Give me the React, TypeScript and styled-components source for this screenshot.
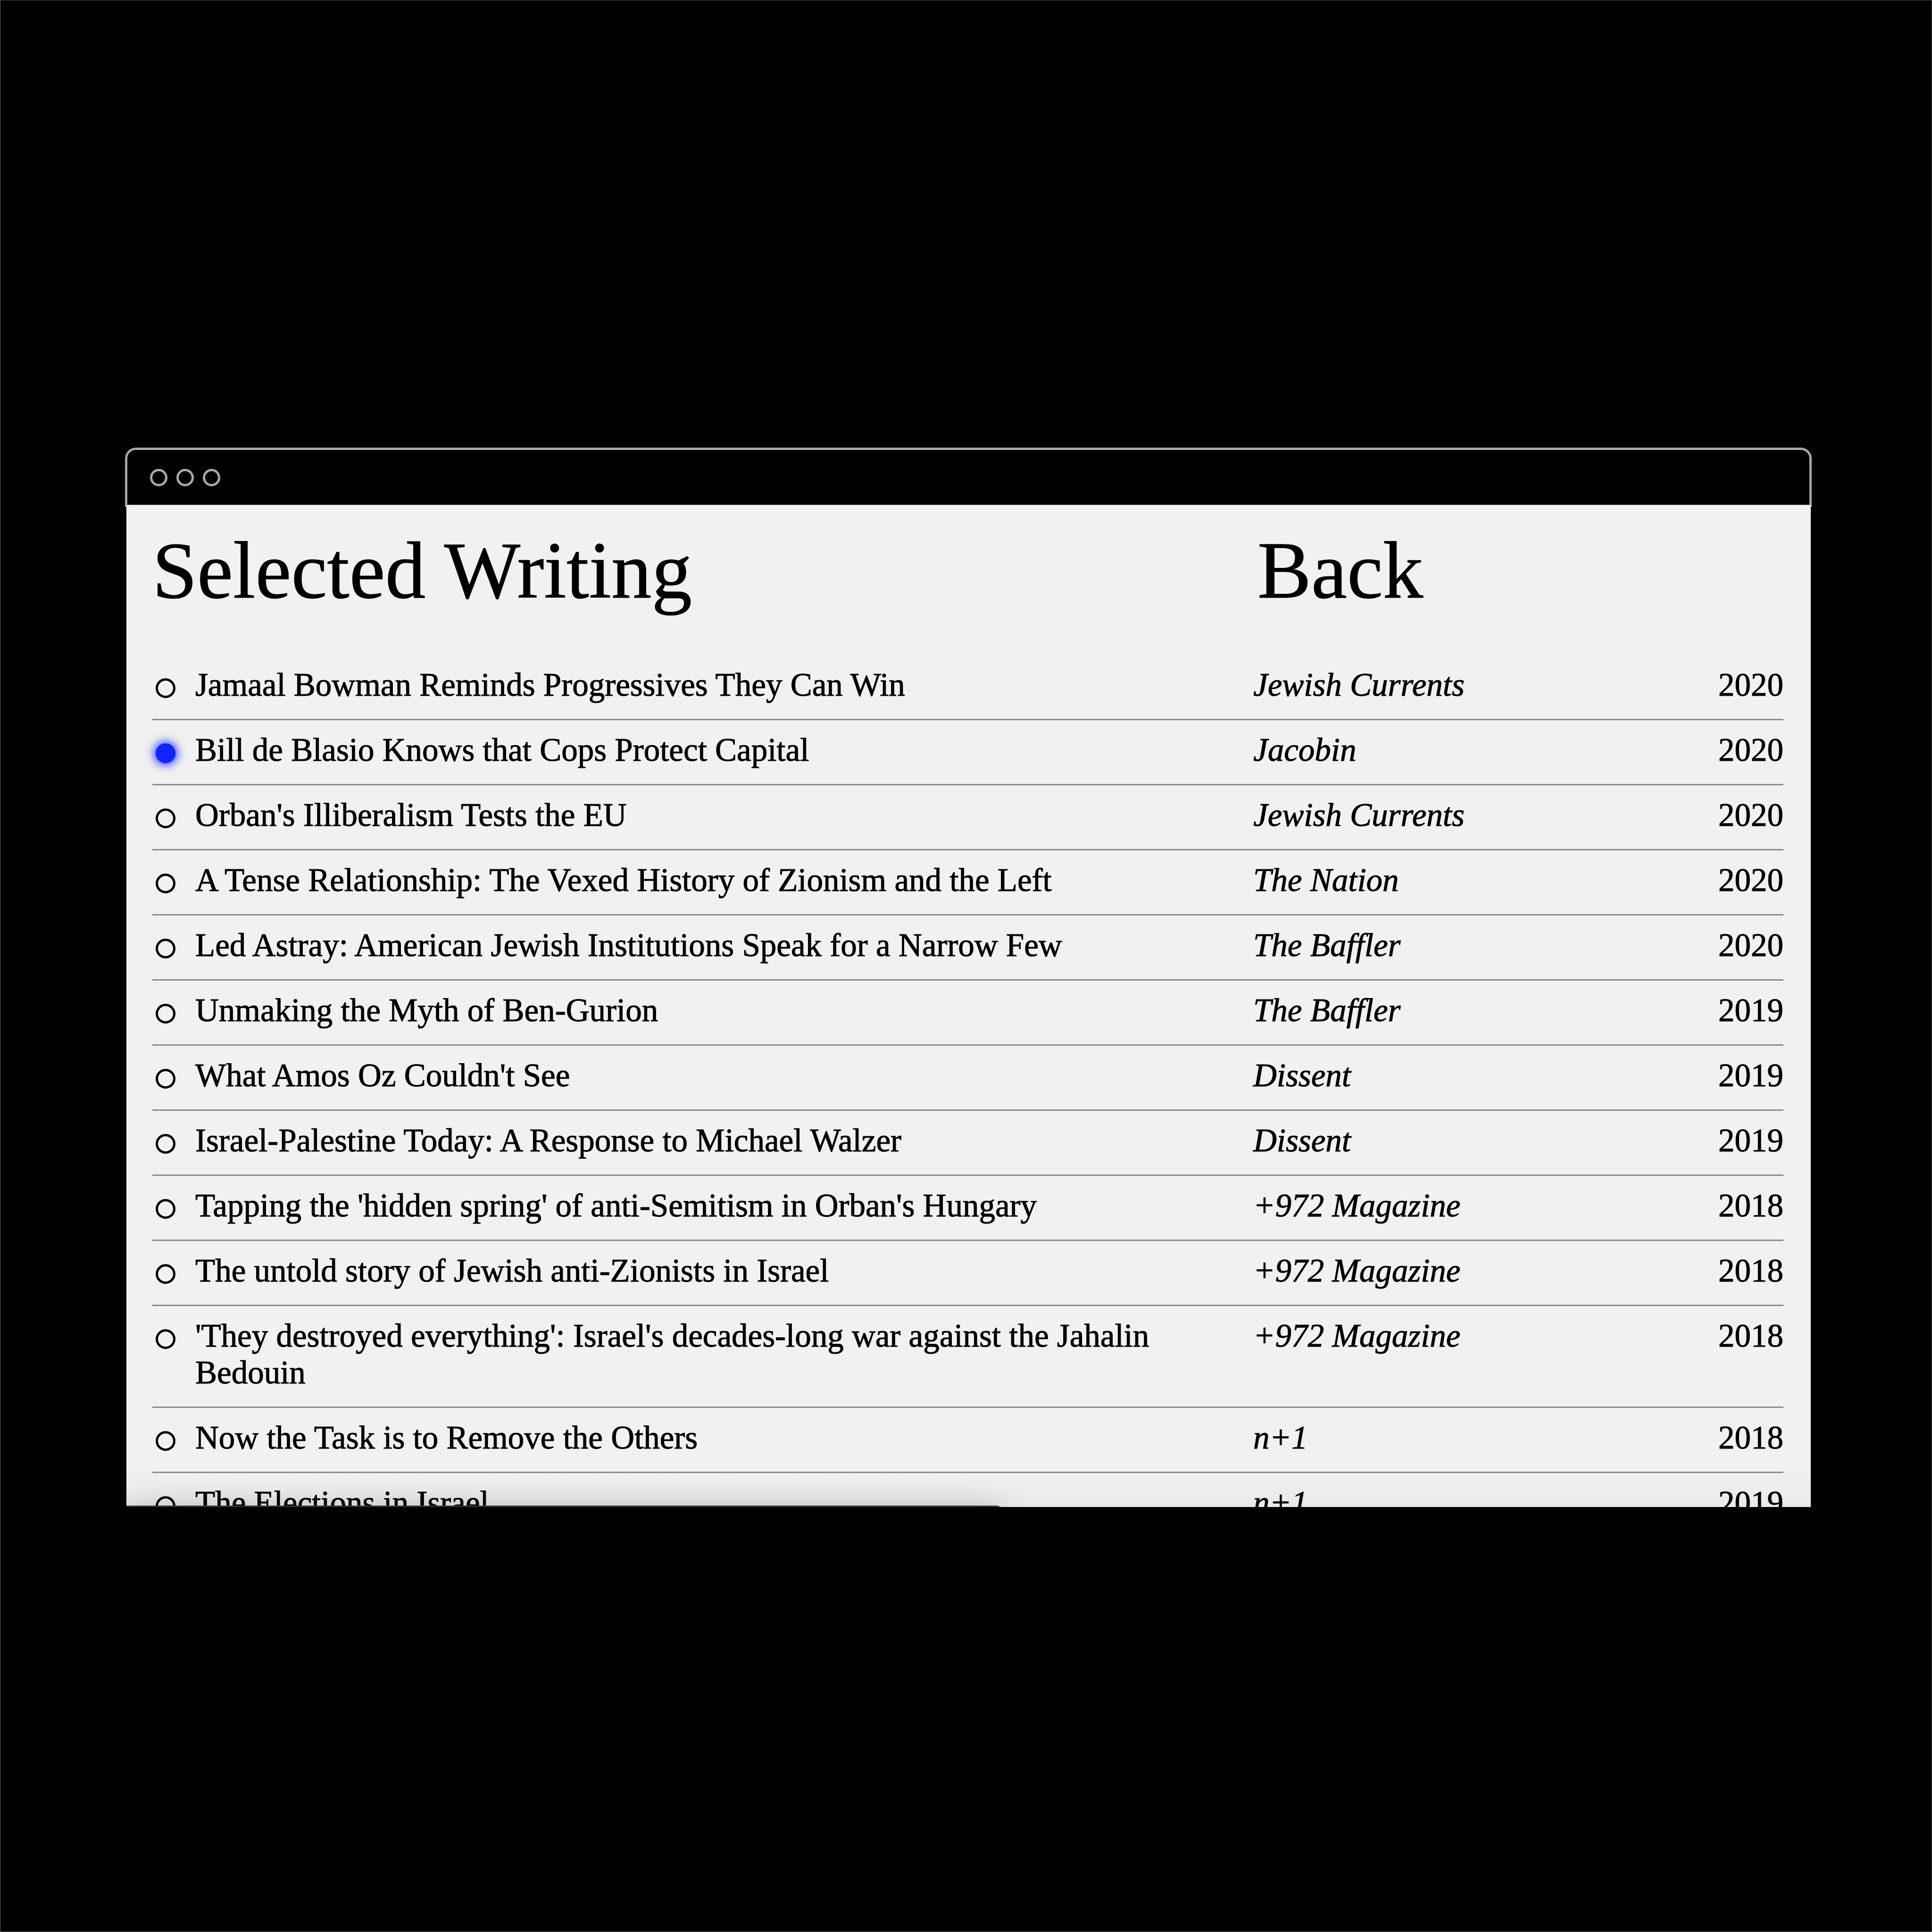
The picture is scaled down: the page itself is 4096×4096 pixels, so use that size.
import React from "react";
import styled, { createGlobalStyle } from "styled-components";

const GlobalStyle = createGlobalStyle`
  *, *::before, *::after { box-sizing: border-box; }
  body {
    margin: 0;
    background: #000;
    color: #000;
    font-family: "Liberation Serif", "Times New Roman", Times, serif;
    -webkit-text-stroke: 1px currentColor;
  }
`;

const Page = styled.div`
  min-height: 100vh;
  padding: 948px 254px 0 264px;
  border: 1px solid;
  border-color: #444 #444 #666 #666;
`;

const TitleBar = styled.div`
  display: flex;
  align-items: center;
  gap: 19px;
  height: 126px;
  padding: 0 48px;
  border: 5px solid #9faaaa;
  border-radius: 23px 23px 0 0;
`;

const WindowDot = styled.span`
  width: 37px;
  height: 37px;
  border: 5px solid #9faaaa;
  border-radius: 50%;
`;

const Viewport = styled.main`
  position: relative;
  aspect-ratio: 3571 / 2124;
  margin: -4px 2px 0 3px;
  padding: 39px 58px 0 55px;
  overflow: hidden;
  background: #f1f1f1;

  &::after {
    content: "";
    position: absolute;
    inset: auto 0 0;
    height: 90px;
    background: linear-gradient(transparent, rgba(0, 0, 0, 0.03));
    pointer-events: none;
  }
`;

const Header = styled.header`
  display: grid;
  grid-template-columns: 1fr 1115px;
  margin-bottom: 79px;
  font-size: 171px;
  line-height: 200px;
`;

const Heading = styled.h1`
  margin: 0;
  font-size: inherit;
  font-weight: 400;
`;

const PlainLink = styled.a`
  color: inherit;
  text-decoration: none;
`;

const Articles = styled.table`
  width: 100%;
  table-layout: fixed;
  border-collapse: separate;
  border-spacing: 0;
  font-size: 69px;
  line-height: 78px;
`;

const Column = styled.col<{ $width?: number }>`
  width: ${({ $width }) => ($width ? `${$width}px` : "auto")};
`;

const cell = `
  padding: 24px 0 33px;
  border-bottom: 3px solid #8b8b8b;
  vertical-align: top;
  text-align: left;
  font-weight: 400;
`;

const BulletCell = styled.td`
  ${cell}
  padding: 49px 0 0 7px;
`;

const Bullet = styled.span<{ $active: boolean }>`
  display: block;
  width: 42px;
  height: 42px;
  border: 5px solid ${({ $active }) => ($active ? "#0f24ff" : "#000")};
  border-radius: 50%;
  background: ${({ $active }) => ($active ? "#0f24ff" : "transparent")};
  box-shadow: ${({ $active }) => ($active ? "0 0 20px 3px #0f24ff" : "none")};
`;

const TitleCell = styled.th`
  ${cell}
  padding-right: 100px;
`;

const SourceCell = styled.td`
  ${cell}
  font-style: italic;
`;

const YearCell = styled.td`
  ${cell}
  text-align: right;
`;

const StatusBubble = styled.div`
  position: absolute;
  left: 0;
  bottom: -77px;
  width: 52%;
  height: 80px;
  border-radius: 0 12px 0 0;
  background: #333537;
  box-shadow: 0 4px 60px rgba(0, 0, 0, 0.22);
`;

type Article = { title: string; source: string; year: number; active?: boolean };

const articles: Article[] = [
  { title: "Jamaal Bowman Reminds Progressives They Can Win", source: "Jewish Currents", year: 2020 },
  { title: "Bill de Blasio Knows that Cops Protect Capital", source: "Jacobin", year: 2020, active: true },
  { title: "Orban's Illiberalism Tests the EU", source: "Jewish Currents", year: 2020 },
  { title: "A Tense Relationship: The Vexed History of Zionism and the Left", source: "The Nation", year: 2020 },
  { title: "Led Astray: American Jewish Institutions Speak for a Narrow Few", source: "The Baffler", year: 2020 },
  { title: "Unmaking the Myth of Ben-Gurion", source: "The Baffler", year: 2019 },
  { title: "What Amos Oz Couldn't See", source: "Dissent", year: 2019 },
  { title: "Israel-Palestine Today: A Response to Michael Walzer", source: "Dissent", year: 2019 },
  { title: "Tapping the 'hidden spring' of anti-Semitism in Orban's Hungary", source: "+972 Magazine", year: 2018 },
  { title: "The untold story of Jewish anti-Zionists in Israel", source: "+972 Magazine", year: 2018 },
  {
    title: "'They destroyed everything': Israel's decades-long war against the Jahalin Bedouin",
    source: "+972 Magazine",
    year: 2018,
  },
  { title: "Now the Task is to Remove the Others", source: "n+1", year: 2018 },
  { title: "The Elections in Israel", source: "n+1", year: 2019 },
];

export default function App() {
  return (
    <>
      <GlobalStyle />
      <Page>
        <TitleBar aria-hidden="true">
          <WindowDot />
          <WindowDot />
          <WindowDot />
        </TitleBar>
        <Viewport>
          <Header>
            <Heading>Selected Writing</Heading>
            <nav>
              <PlainLink href="#back">Back</PlainLink>
            </nav>
          </Header>
          <Articles>
            <colgroup>
              <Column $width={91} />
              <Column />
              <Column $width={874} />
              <Column $width={250} />
            </colgroup>
            <tbody>
              {articles.map(({ title, source, year, active }) => (
                <tr key={title}>
                  <BulletCell>
                    <Bullet $active={Boolean(active)} />
                  </BulletCell>
                  <TitleCell scope="row">
                    <PlainLink href="#article">{title}</PlainLink>
                  </TitleCell>
                  <SourceCell>{source}</SourceCell>
                  <YearCell>{year}</YearCell>
                </tr>
              ))}
            </tbody>
          </Articles>
          <StatusBubble />
        </Viewport>
      </Page>
    </>
  );
}
